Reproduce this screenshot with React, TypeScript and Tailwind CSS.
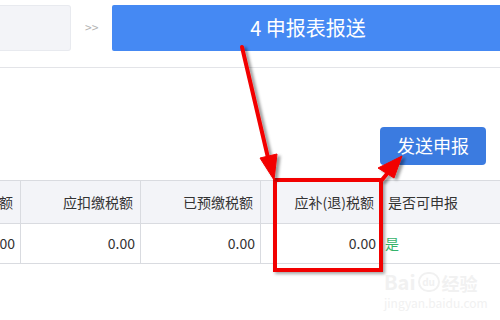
const font = { fontFamily: '"Microsoft YaHei", "Noto Sans CJK SC", "Noto Sans", sans-serif' }

const headers = ['额', '应扣缴税额', '已预缴税额', '应补(退)税额']

export default function App() {
  return (
    <div
      className="relative w-[500px] h-[320px] overflow-hidden bg-white text-[#333]"
      style={font}
    >
      {/* steps bar */}
      <div className="flex items-start pt-[5px] h-[51px]">
        <div className="w-[71px] h-[46px] bg-[#f3f4f8] border border-[#e8eaef] rounded-r-[3px] border-l-0" />
        <div className="ml-[14px] w-[14px] mt-[16px] text-[12px] text-[#b4b4b4] leading-none">&gt;&gt;</div>
        <div className="ml-[13px] flex-1 h-[46px] bg-[#4589f3] rounded-l-[2px] flex items-center justify-center text-white text-[20px] pl-[4px]">
          4 申报表报送
        </div>
      </div>
      <div className="mt-[16px] h-px bg-[#e3e4e8]" />

      {/* actions */}
      <div className="pt-[59px] flex">
        <button className="ml-[380px] w-[106px] h-[38px] rounded-[4px] bg-[#3b7be0] text-white text-[18px] leading-none pb-[2px]">
          发送申报
        </button>
      </div>

      {/* table */}
      <div className="mt-[15px] text-[14px]">
        <div className="grid grid-cols-[21px_120px_120px_121px_1fr] h-[44px] bg-[#f3f4f8] border-y border-[#d9dbe0]">
          {headers.map((h) => (
            <div key={h} className="flex items-center justify-end pr-[7px] border-r border-[#d9dbe0] whitespace-nowrap overflow-hidden">
              {h}
            </div>
          ))}
          <div className="flex items-center pl-[6px]">是否可申报</div>
        </div>
        <div className="grid grid-cols-[21px_120px_120px_121px_1fr] h-[40px] border-b border-[#d9dbe0]">
          {['0.00', '0.00', '0.00', '0.00'].map((v, i) => (
            <div key={i} className="flex items-center justify-end pr-[5px] border-r border-[#d9dbe0] overflow-hidden whitespace-nowrap">
              {v}
            </div>
          ))}
          <div className="flex items-center pl-[3px] text-[#35b36b]">是</div>
        </div>
      </div>

      {/* watermark */}
      <div className="absolute left-[384px] top-[272px] text-[#f1f1f1] leading-none select-none">
        <div className="flex items-end gap-[2px]">
          <span className="text-[20px] font-bold">Bai</span>
          <span className="w-[22px] h-[20px] rounded-full border-2 border-[#f1f1f1] text-[10px] flex items-center justify-center font-bold">du</span>
          <span className="text-[18px] font-bold">经验</span>
        </div>
        <div className="mt-[5px] text-[12px]">jingyan.baidu.com</div>
      </div>

      {/* red annotation box */}
      <div className="absolute left-[273px] top-[178px] w-[110px] h-[94px] border-[4px] border-[#f20000] shadow-[2px_2px_3px_rgba(0,0,0,0.35)]" />

      {/* arrows */}
      <svg className="absolute inset-0 pointer-events-none" width="500" height="320">
        <defs>
          <filter id="sh" x="-50%" y="-50%" width="200%" height="200%">
            <feDropShadow dx="3" dy="2" stdDeviation="1.5" floodColor="#000" floodOpacity="0.4" />
          </filter>
        </defs>
        <g filter="url(#sh)" fill="#f20000" stroke="#f20000">
          <line x1="242" y1="47" x2="269" y2="162" strokeWidth="4" strokeLinecap="round" />
          <polygon points="274,180 260,158 277,154" strokeWidth="1" />
          <line x1="381" y1="181" x2="391" y2="169" strokeWidth="4" />
          <polygon points="402,156 378,168 394,178" strokeWidth="1" />
        </g>
      </svg>
    </div>
  )
}
